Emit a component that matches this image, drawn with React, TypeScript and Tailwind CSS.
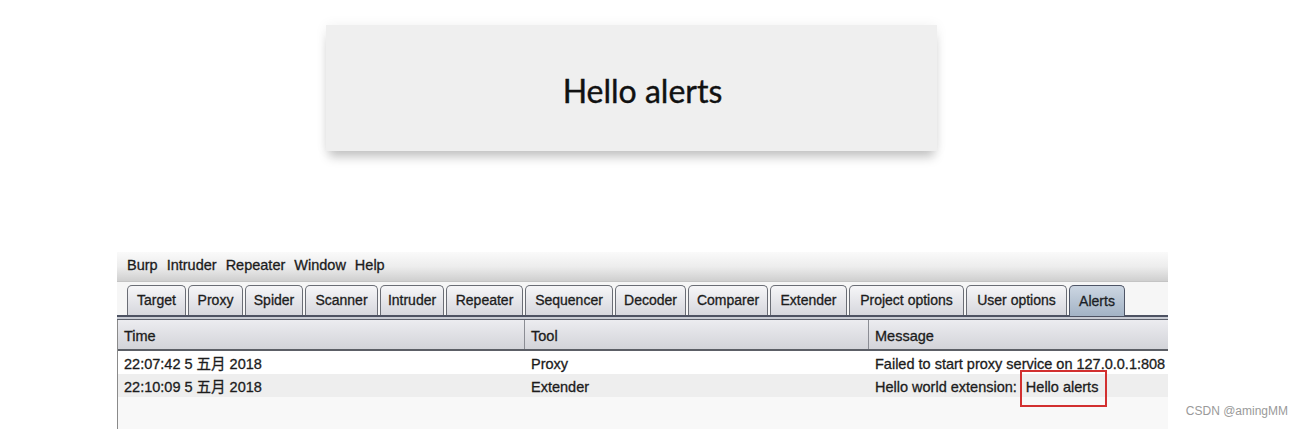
import React from "react";

const tabs: { label: string; w: string; active?: boolean }[] = [
  { label: "Target", w: "w-[59px]" },
  { label: "Proxy", w: "w-[55px]" },
  { label: "Spider", w: "w-[58px]" },
  { label: "Scanner", w: "w-[73px]" },
  { label: "Intruder", w: "w-[64px]" },
  { label: "Repeater", w: "w-[77px]" },
  { label: "Sequencer", w: "w-[88px]" },
  { label: "Decoder", w: "w-[71px]" },
  { label: "Comparer", w: "w-[80px]" },
  { label: "Extender", w: "w-[77px]" },
  { label: "Project options", w: "w-[115px]" },
  { label: "User options", w: "w-[101px]" },
  { label: "Alerts", w: "w-[56px]", active: true },
];

export default function App() {
  return (
    <div className="relative w-[1303px] h-[429px] overflow-hidden bg-white">
      {/* popup */}
      <div className="ml-[326px] pt-[25px]">
        <div className="w-[611px] h-[126px] bg-[#efefef] flex items-center justify-center pl-[22px] shadow-[0_9px_10px_-3px_rgba(0,0,0,0.22),0_0_12px_rgba(0,0,0,0.06)]">
          <span
            className="text-[32px] text-[#111] leading-none pt-[6px] [-webkit-text-stroke:0.4px_#111]"
            style={{ fontFamily: 'Lato, "Noto Sans", sans-serif' }}
          >
            Hello alerts
          </span>
        </div>
      </div>

      {/* Burp window */}
      <div
        className="ml-[117px] mt-[101px] w-[1051px] text-[14.5px] text-[#1c1c1c] [-webkit-text-stroke:0.3px_#1c1c1c]"
        style={{ fontFamily: '"Liberation Sans", Arial, "Noto Sans CJK SC", sans-serif' }}
      >
        {/* menu bar */}
        <div className="h-[30px] flex items-center gap-[9px] pl-[10px] pb-[2px] bg-gradient-to-b from-[#fafafa] via-[#ededed] to-[#cfcfcf] border-b border-[#c4c4c4]">
          <span>Burp</span>
          <span>Intruder</span>
          <span>Repeater</span>
          <span>Window</span>
          <span>Help</span>
        </div>

        {/* tabs */}
        <div className="h-[33px] pt-[3px] pl-[10px] flex items-end gap-[2px] bg-[#f6f6f6] text-[14px]">
          {tabs.map((t) => (
            <div
              key={t.label}
              className={
                t.active
                  ? `${t.w} h-[31px] -mb-[1px] flex items-center justify-center rounded-t-[5px] border border-b-0 border-[#4e5566] bg-gradient-to-b from-[#ccd6e2] to-[#a3b3c5] text-[#1a1f2a]`
                  : `${t.w} h-[30px] flex items-center justify-center rounded-t-[5px] border border-b-0 border-[#6a6d75] bg-gradient-to-b from-[#f6f6f8] to-[#d6d7dd]`
              }
            >
              {t.label}
            </div>
          ))}
        </div>
        <div className="h-[2px] bg-[#4d5262]" />
        <div className="h-[2px] bg-[#c8cbd3]" />
        <div className="h-[1px] bg-[#5d616c]" />

        {/* table */}
        <div className="border-l border-[#8a8a8a] h-[109px] bg-[#f8f8f8]">
          <div className="grid grid-cols-[407px_344px_1fr] h-[31px] bg-gradient-to-b from-[#ececf0] to-[#d3d4d9] border-b-2 border-[#5c5f66]">
            <div className="flex items-center pl-[6px] pt-[4px] border-r border-[#8b8d94]">Time</div>
            <div className="flex items-center pl-[6px] pt-[4px] border-r border-[#8b8d94]">Tool</div>
            <div className="flex items-center pl-[6px] pt-[4px]">Message</div>
          </div>
          <div className="grid grid-cols-[407px_344px_1fr] h-[23px] bg-white items-center pt-[3px]">
            <div className="pl-[6px]">22:07:42 5 五月 2018</div>
            <div className="pl-[6px]">Proxy</div>
            <div className="pl-[6px] whitespace-nowrap overflow-hidden">
              Failed to start proxy service on 127.0.0.1:808
            </div>
          </div>
          <div className="grid grid-cols-[407px_344px_1fr] h-[23px] bg-[#eeeeee] items-center pt-[3px]">
            <div className="pl-[6px]">22:10:09 5 五月 2018</div>
            <div className="pl-[6px]">Extender</div>
            <div className="pl-[6px] whitespace-nowrap flex items-center">
              <span>Hello world extension:</span>
              <span className="relative ml-[9px]">
                Hello alerts
                <span className="absolute -left-[6px] -right-[9px] -top-[7px] -bottom-[8px] border-2 border-[#d23030]" />
              </span>
            </div>
          </div>
        </div>
      </div>

      <div
        className="absolute right-[15px] bottom-[9px] text-[12px] text-[#9a9a9a]"
        style={{ fontFamily: '"Liberation Sans", Arial, sans-serif' }}
      >
        CSDN @amingMM
      </div>
    </div>
  );
}
